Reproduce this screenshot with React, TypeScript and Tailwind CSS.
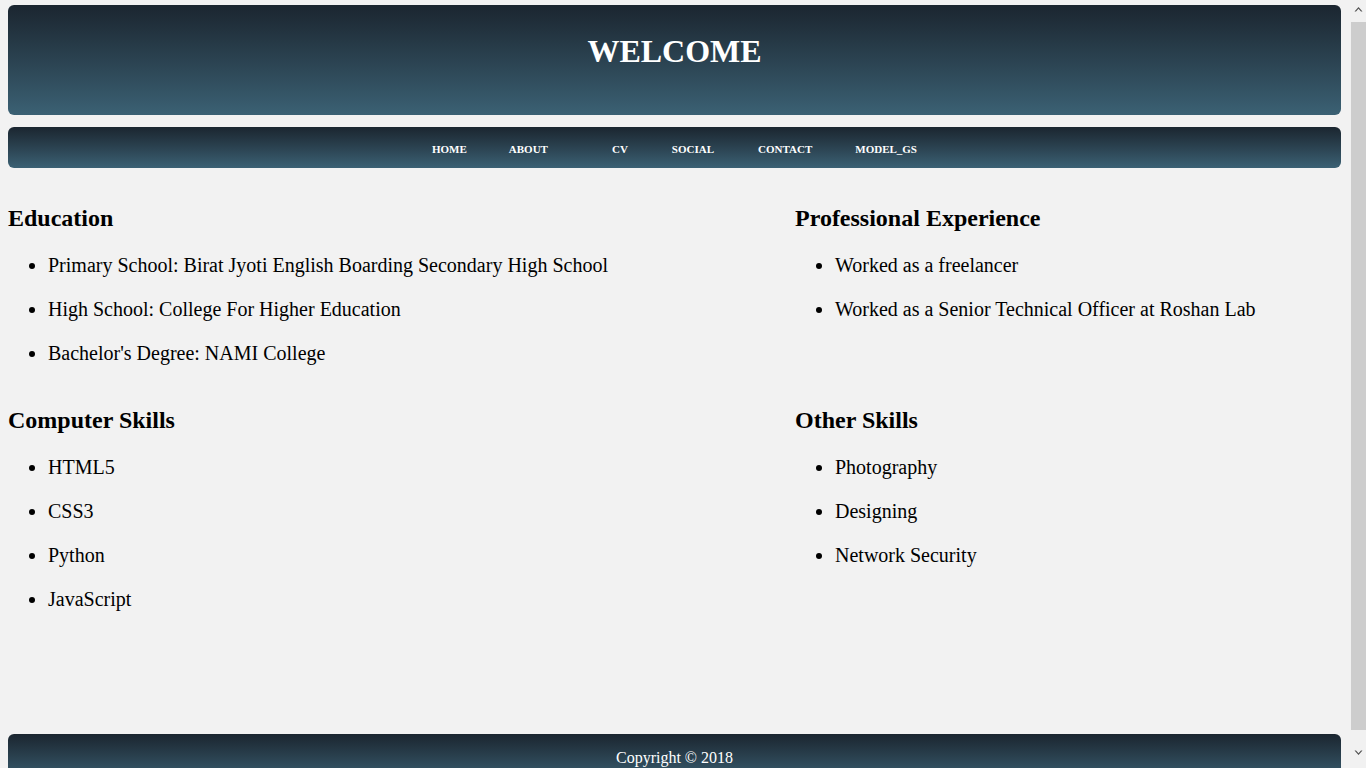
const navLinks = [
  { label: 'HOME', ml: 'ml-0' },
  { label: 'ABOUT', ml: 'ml-[42px]' },
  { label: 'CV', ml: 'ml-[64px]' },
  { label: 'SOCIAL', ml: 'ml-[44px]' },
  { label: 'CONTACT', ml: 'ml-[44px]' },
  { label: 'MODEL_GS', ml: 'ml-[43px]' },
];

const sections = [
  {
    title: 'Education',
    items: [
      'Primary School: Birat Jyoti English Boarding Secondary High School',
      'High School: College For Higher Education',
      "Bachelor's Degree: NAMI College",
    ],
  },
  {
    title: 'Professional Experience',
    items: ['Worked as a freelancer', 'Worked as a Senior Technical Officer at Roshan Lab'],
  },
  {
    title: 'Computer Skills',
    items: ['HTML5', 'CSS3', 'Python', 'JavaScript'],
  },
  {
    title: 'Other Skills',
    items: ['Photography', 'Designing', 'Network Security'],
  },
];

function Section({ title, items }: { title: string; items: string[] }) {
  return (
    <div>
      <h2 className="text-[24px] font-bold leading-[28px]">{title}</h2>
      <ul className="mt-[22px] list-disc pl-[40px]">
        {items.map((item) => (
          <li key={item} className="mb-[21px] text-[20px] leading-[23px]">
            {item}
          </li>
        ))}
      </ul>
    </div>
  );
}

// classic browser scrollbar as seen in the screenshot
function FakeScrollbar() {
  return (
    <div className="fixed top-0 right-0 flex h-screen w-[16px] flex-col items-center bg-[#f1f1f1]">
      <div className="flex h-[17px] w-full items-center justify-center">
        <svg width="9" height="6" viewBox="0 0 9 6">
          <path d="M0.5 5.5 L4.5 1 L8.5 5.5 L7 5.5 L4.5 2.8 L2 5.5 Z" fill="#505050" />
        </svg>
      </div>
      <div className="mt-[5px] h-[708px] w-[15px] self-end bg-[#cdcdcd]" />
      <div className="flex flex-1 w-full items-center justify-center pt-[8px]">
        <svg width="9" height="6" viewBox="0 0 9 6">
          <path d="M0.5 0.5 L4.5 5 L8.5 0.5 L7 0.5 L4.5 3.2 L2 0.5 Z" fill="#505050" />
        </svg>
      </div>
    </div>
  );
}

export default function App() {
  return (
    <div className="min-h-screen bg-[#f2f2f2]">
      <div
        className="w-[1349px] px-[8px] pt-[5px] pb-[14px] text-black"
        style={{ fontFamily: '"Liberation Serif", "Times New Roman", serif' }}
      >
        {/* Header */}
        <header className="h-[110px] rounded-[6px] bg-gradient-to-b from-[#1b2630] to-[#3b6174] pt-[28px]">
          <h1 className="text-center text-[32px] font-bold leading-[37px] text-white">WELCOME</h1>
        </header>

        {/* Nav */}
        <nav className="mt-[12px] flex h-[41px] items-center justify-center rounded-[6px] bg-gradient-to-b from-[#1b2630] to-[#3b6174] pt-[4px]">
          {navLinks.map((link) => (
            <a key={link.label} href="#" className={`${link.ml} text-[11px] font-bold text-white`}>
              {link.label}
            </a>
          ))}
        </nav>

        {/* Content */}
        <main className="mt-[36px] grid grid-cols-[787px_1fr] gap-y-[20px]">
          {sections.map((s) => (
            <Section key={s.title} title={s.title} items={s.items} />
          ))}
        </main>

        {/* Footer */}
        <footer className="mt-[102px] flex h-[48px] items-center justify-center rounded-[6px] bg-gradient-to-b from-[#1b2630] to-[#3b6174]">
          <p className="text-[16px] text-white">Copyright © 2018</p>
        </footer>
      </div>
      <FakeScrollbar />
    </div>
  );
}
